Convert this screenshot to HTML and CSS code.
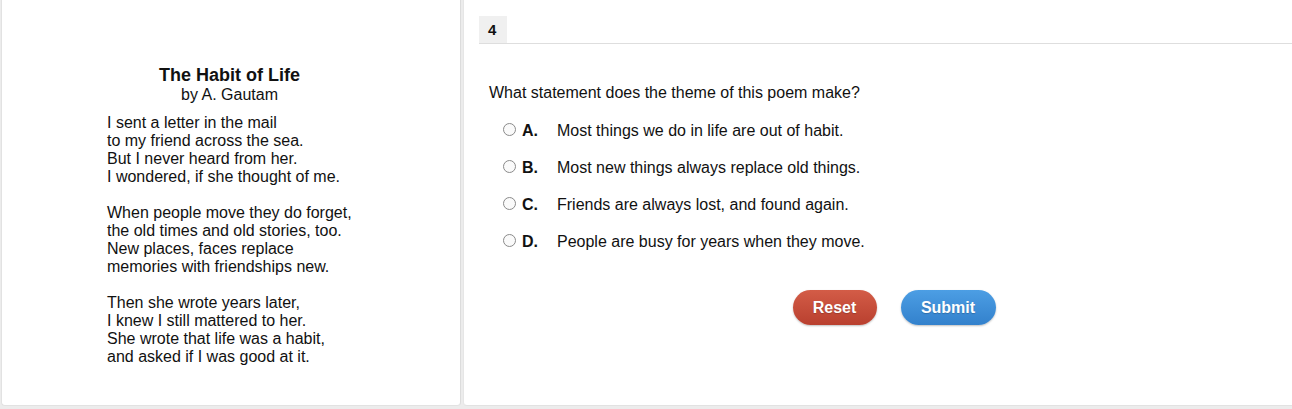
FILE: index.html
```html
<!DOCTYPE html>
<html>
<head>
<meta charset="utf-8">
<link rel="stylesheet" href="styles.css">
</head>
<body>
<div class="page">
  <div class="passage">
    <div class="poem">
      <div class="title">The Habit of Life</div>
      <div class="author">by A. Gautam</div>
      <div class="verses">
        <p class="stanza">I sent a letter in the mail<br>to my friend across the sea.<br>But I never heard from her.<br>I wondered, if she thought of me.</p>
        <p class="stanza">When people move they do forget,<br>the old times and old stories, too.<br>New places, faces replace<br>memories with friendships new.</p>
        <p class="stanza">Then she wrote years later,<br>I knew I still mattered to her.<br>She wrote that life was a habit,<br>and asked if I was good at it.</p>
      </div>
    </div>
  </div>
  <div class="question">
    <div class="tabs"><span class="tab">4</span></div>
    <div class="stem">What statement does the theme of this poem make?</div>
    <div class="options">
      <div class="option"><span class="radio"></span><span class="letter">A.</span><span class="text">Most things we do in life are out of habit.</span></div>
      <div class="option"><span class="radio"></span><span class="letter">B.</span><span class="text">Most new things always replace old things.</span></div>
      <div class="option"><span class="radio"></span><span class="letter">C.</span><span class="text">Friends are always lost, and found again.</span></div>
      <div class="option"><span class="radio"></span><span class="letter">D.</span><span class="text">People are busy for years when they move.</span></div>
    </div>
    <div class="actions">
      <button class="btn reset">Reset</button>
      <button class="btn submit">Submit</button>
    </div>
  </div>
</div>
</body>
</html>
```
FILE: styles.css
```css
html, body {
  margin: 0;
  padding: 0;
}
body {
  width: 1292px;
  height: 409px;
  background: #ececec;
  font-family: Arial, "Liberation Sans", sans-serif;
  color: #111;
  overflow: hidden;
}
.page {
  display: flex;
  height: 406px;
  gap: 2px;
}
.passage {
  width: 460px;
  box-sizing: border-box;
  background: #fff;
  border-left: 1px solid #e2e2e2;
  border-right: 1px solid #dcdcdc;
  border-bottom: 1px solid #e2e2e2;
  border-radius: 0 0 4px 4px;
  margin-left: 1px;
}
.poem {
  padding-top: 65px;
}
.title {
  text-align: center;
  font-weight: bold;
  font-size: 18px;
  line-height: 21px;
  padding-right: 3px;
}
.author {
  text-align: center;
  font-size: 16px;
  line-height: 18px;
  margin-bottom: 10px;
  padding-right: 3px;
}
.verses {
  padding-left: 105px;
}
.stanza {
  margin: 0 0 18px 0;
  font-size: 16px;
  line-height: 18px;
}
.question {
  flex: 1;
  background: #fff;
  border-left: 1px solid #e6e6e6;
  border-bottom: 1px solid #e2e2e2;
  border-radius: 0 0 0 4px;
  padding-top: 16px;
}
.tabs {
  margin-left: 15px;
  border-bottom: 1px solid #dedede;
  display: flex;
}
.tab {
  display: block;
  width: 28px;
  height: 27px;
  background: #f0f0f0;
  font-weight: bold;
  font-size: 15px;
  line-height: 27px;
  padding-left: 9px;
  box-sizing: border-box;
}
.stem {
  margin-top: 39px;
  margin-left: 25px;
  font-size: 16px;
  line-height: 20px;
}
.options {
  margin-top: 18px;
  margin-left: 39px;
  display: flex;
  flex-direction: column;
  gap: 17px;
}
.option {
  display: flex;
  align-items: center;
  height: 20px;
  font-size: 16px;
}
.radio {
  width: 11px;
  height: 11px;
  border: 1px solid #8a8a8a;
  border-radius: 50%;
  background: #fafafa;
  margin-right: 6px;
  margin-top: -3px;
}
.letter {
  font-weight: bold;
  width: 35px;
}
.actions {
  display: flex;
  justify-content: center;
  gap: 24px;
  margin-top: 38px;
  margin-left: 130px;
  width: 600px;
}
.btn {
  border: none;
  height: 35px;
  border-radius: 18px;
  color: #fff;
  font-family: Arial, "Liberation Sans", sans-serif;
  font-weight: bold;
  font-size: 16px;
  padding: 0;
  box-shadow: 0 1px 2px rgba(0,0,0,0.25);
  text-shadow: 0 1px 1px rgba(0,0,0,0.2);
}
.reset {
  width: 84px;
  background: linear-gradient(#d35c47, #b9402f);
}
.submit {
  width: 95px;
  background: linear-gradient(#4c9ee4, #3381cc);
}
```
